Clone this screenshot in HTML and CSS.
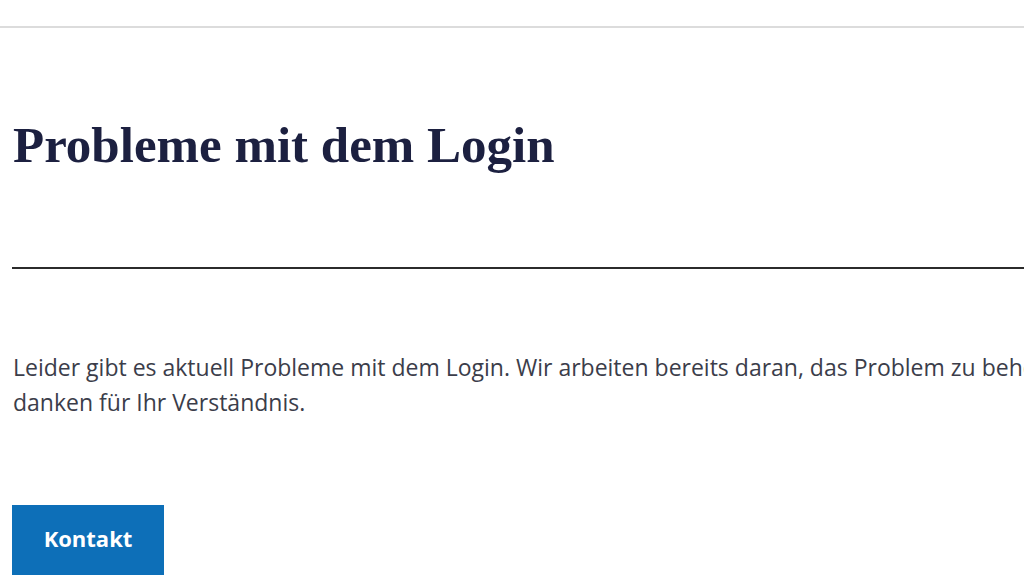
FILE: index.html
```html
<!DOCTYPE html>
<html lang="de">
<head>
    <meta charset="UTF-8">
    <meta name="viewport" content="width=device-width, initial-scale=1.0">
    <title>Probleme mit dem Login</title>
    <link rel="stylesheet" href="styles.css">
</head>
<body>
    <header class="topbar"></header>

    <main class="page">
        <h1 class="title">Probleme mit dem Login</h1>
        <hr class="divider">
        <p class="message">Leider gibt es aktuell Probleme mit dem Login. Wir arbeiten bereits daran, das Problem zu beheben. Wir danken für Ihr Verständnis.</p>
        <a class="button" href="#">Kontakt</a>
    </main>
</body>
</html>
```

FILE: styles.css
```css
html, body {
    margin: 0;
    padding: 0;
    background: #ffffff;
    overflow: hidden;
    height: 576px;
}

body {
    font-family: 'Open Sans', sans-serif;
    width: 1024px;
}

.topbar {
    height: 26px;
    border-bottom: 2px solid #dcdcdc;
}

.page {
    width: 1300px;
    padding: 0 0 0 12px;
}

.title {
    margin: 90px 0 0 1px;
    font-family: 'Liberation Serif', serif;
    font-size: 51px;
    font-weight: bold;
    line-height: 54px;
    color: #1c2040;
}

.divider {
    margin: 95px 0 0 0;
    border: none;
    border-top: 2px solid #2b2b2b;
}

.message {
    margin: 81px 0 0 1px;
    width: 1150px;
    font-size: 23px;
    line-height: 35px;
    color: #3b3d4a;
}

.button {
    display: inline-block;
    margin-top: 85px;
    width: 152px;
    height: 70px;
    line-height: 66px;
    text-align: center;
    background: #0d6fb8;
    color: #ffffff;
    font-size: 22px;
    font-weight: bold;
    text-decoration: none;
}
```
